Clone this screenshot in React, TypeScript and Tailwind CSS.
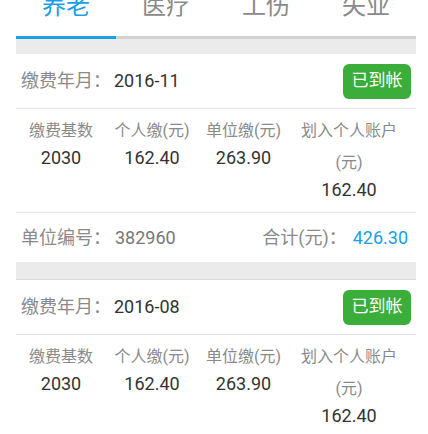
import React from "react";

const FONT = "font-['Roboto','Noto_Sans_CJK_SC',sans-serif]";

function Card({ month, unitNo, total }: { month: string; unitNo: string; total: string }) {
  return (
    <div>
      <div className="flex h-[55px] items-center justify-between border-b border-[#e4e4e4] pl-[5px] pr-[5px]">
        <div className="flex items-center text-[18px] leading-[22px]">
          <span className="text-[#8a8a8a]">缴费年月：</span>
          <span className="ml-[3px] text-[#333333]">{month}</span>
        </div>
        <div className="flex h-[35px] w-[68px] items-center justify-center rounded-[6px] bg-[#3aad3a] text-[17px] text-white">
          已到帐
        </div>
      </div>
      <div className="grid grid-cols-[90px_92px_91px_120px] border-b border-[#e4e4e4] pt-[6px] pb-[11px] text-center">
        {[
          ["缴费基数", "2030"],
          ["个人缴(元)", "162.40"],
          ["单位缴(元)", "263.90"],
          ["划入个人账户(元)", "162.40"],
        ].map(([h, v], i) => (
          <div key={i} className="flex flex-col items-center">
            <div className={`text-[16px] leading-[32px] text-[#8a8a8a] ${i === 3 ? "w-[100px]" : "whitespace-nowrap"}`}>{h}</div>
            <div className="text-[18px] leading-[22px] text-[#333333]">{v}</div>
          </div>
        ))}
      </div>
      <div className="flex h-[49px] items-center justify-between pl-[5px] pr-[8px] text-[18px] leading-[22px]">
        <div className="flex items-center">
          <span className="text-[#8a8a8a]">单位编号：</span>
          <span className="ml-[4px] text-[#777777]">{unitNo}</span>
        </div>
        <div className="flex items-center">
          <span className="text-[#8a8a8a]">合计(元)：</span>
          <span className="ml-[6px] text-[#18a0ec]">{total}</span>
        </div>
      </div>
    </div>
  );
}

export default function App() {
  return (
    <div className={`w-[428px] min-h-[434px] bg-white ${FONT}`}>
      <div className="ml-4 w-[400px]">
        <div className="h-[36px] overflow-hidden">
          <div className="-mt-[6px] flex text-[24px] leading-[24px]">
            {["养老", "医疗", "工伤", "失业"].map((t, i) => (
              <div key={t} className={`w-[100px] text-center ${i === 0 ? "text-[#1a9fe8]" : "text-[#8a8a8a]"}`}>
                {t}
              </div>
            ))}
          </div>
        </div>
        <div className="flex h-[3px]">
          <div className="w-[100px] bg-[#1a9fe8]" />
          <div className="flex-1 bg-[#d2d2d2]" />
        </div>
        <div className="h-[15px] bg-[#ebebeb]" />
        <Card month="2016-11" unitNo="382960" total="426.30" />
        <div className="h-[18px] border-b border-[#dedede] bg-[#ebebeb]" />
        <Card month="2016-08" unitNo="382960" total="426.30" />
      </div>
    </div>
  );
}
